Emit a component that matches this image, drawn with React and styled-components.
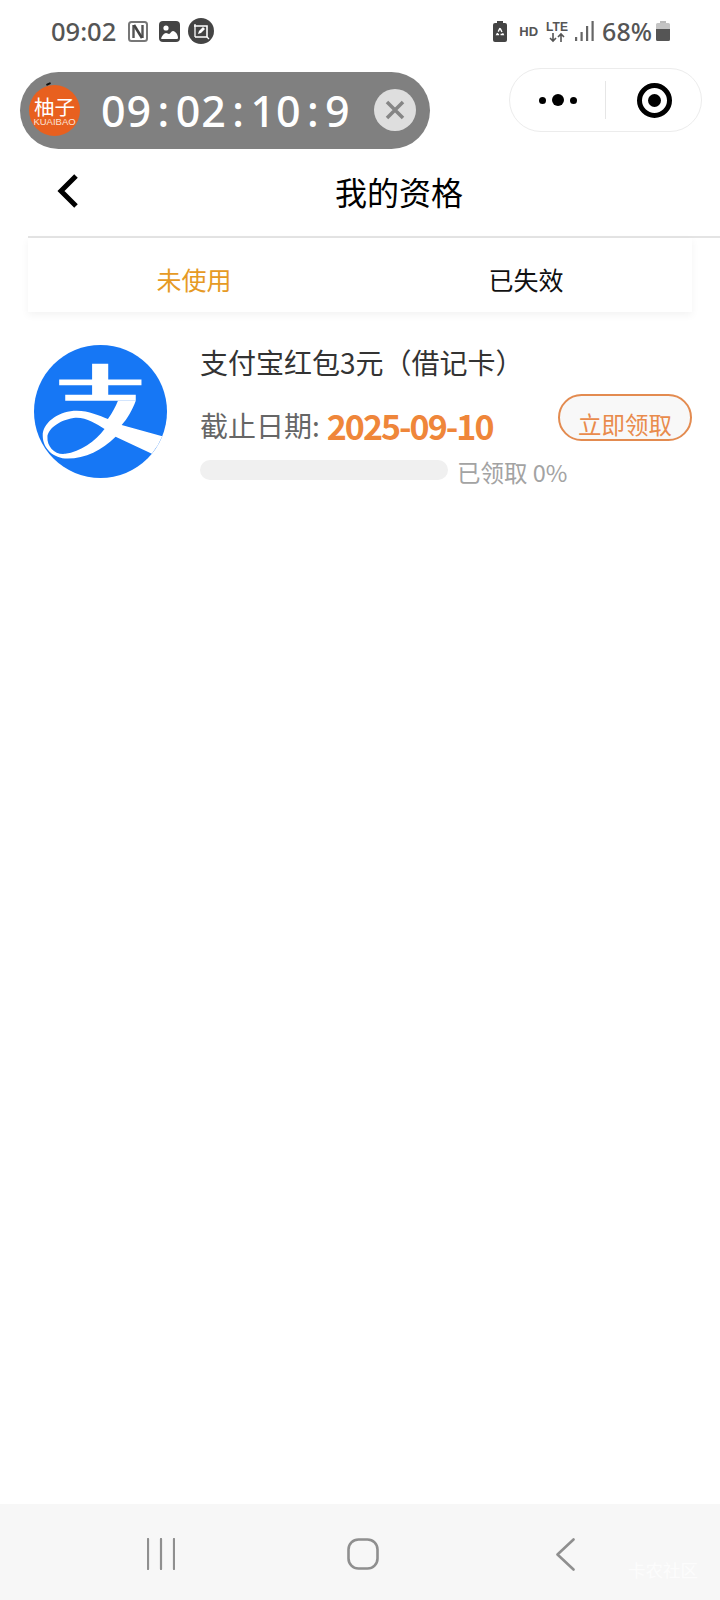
import React from "react";
import styled, { createGlobalStyle } from "styled-components";

const GlobalStyle = createGlobalStyle`
  html, body {
    margin: 0;
    padding: 0;
    background: #fff;
    font-family: "Noto Sans", "Noto Sans CJK SC", sans-serif;
  }
`;

const Page = styled.div`
  position: relative;
  width: 720px;
  height: 1600px;
  display: flex;
  flex-direction: column;
  overflow: hidden;
  background: #fff;
`;

/* status bar */
const StatusBar = styled.div`
  height: 68px;
  flex: none;
  display: flex;
  align-items: flex-start;
  justify-content: space-between;
  padding: 18px 50px 0 51px;
  box-sizing: border-box;
  color: #555;
`;

const StatusGroup = styled.div`
  display: flex;
  align-items: center;
  height: 26px;
`;

const Clock = styled.span`
  font-family: "Noto Sans", sans-serif;
  font-size: 25.5px;
  font-weight: 500;
  line-height: 26px;
  margin-right: 12px;
`;

const Percent = styled.span`
  font-family: "Noto Sans", sans-serif;
  font-size: 25px;
  font-weight: 500;
  line-height: 26px;
  margin: 0 4px 0 8px;
`;

const Hd = styled.span`
  font-family: "Liberation Sans", sans-serif;
  font-weight: 700;
  font-size: 13px;
  margin: 0 8px 0 12px;
`;

const IconSvg = styled.svg`
  display: block;
  flex: none;
  margin-right: ${(p) => p.$gap || 0}px;
`;

/* capsule */
const CapsuleRow = styled.div`
  flex: none;
  display: flex;
  justify-content: flex-end;
  padding-right: 18px;
`;

const Capsule = styled.div`
  width: 193px;
  height: 64px;
  box-sizing: border-box;
  border: 1px solid #ececec;
  border-radius: 32px;
  display: grid;
  grid-template-columns: 1fr 1px 1fr;
  align-items: center;
  justify-items: center;
`;

const CapsuleDivider = styled.div`
  width: 1px;
  height: 38px;
  background: #e6e6e6;
`;

const Dots = styled.div`
  display: flex;
  align-items: center;
  gap: 6px;
`;

const Dot = styled.i`
  display: block;
  width: ${(p) => p.$size}px;
  height: ${(p) => p.$size}px;
  border-radius: 50%;
  background: #000;
`;

const Target = styled.div`
  width: 35px;
  height: 35px;
  margin-left: 2px;
  box-sizing: border-box;
  border: 5px solid #000;
  border-radius: 50%;
  display: flex;
  align-items: center;
  justify-content: center;

  &::after {
    content: "";
    width: 13px;
    height: 13px;
    border-radius: 50%;
    background: #000;
  }
`;

/* floating timer */
const TimerPill = styled.div`
  position: absolute;
  left: 20px;
  top: 72px;
  width: 410px;
  height: 77px;
  border-radius: 39px;
  background: #808080;
  display: flex;
  align-items: center;
  padding-left: 9px;
  box-sizing: border-box;
`;

const TimerLogo = styled.div`
  position: relative;
  width: 51px;
  height: 51px;
  flex: none;
  border-radius: 50%;
  background: #e8601f;
  color: #fff;
  display: flex;
  flex-direction: column;
  align-items: center;
  justify-content: center;

  &::before {
    content: "";
    position: absolute;
    left: 17px;
    top: -2px;
    width: 5px;
    height: 2px;
    border-radius: 2px;
    background: #111;
    transform: rotate(-25deg);
  }
`;

const TimerLogoName = styled.span`
  font-family: "Noto Sans CJK SC", sans-serif;
  font-size: 20.5px;
  line-height: 21px;
`;

const TimerLogoSub = styled.span`
  font-family: "Liberation Sans", sans-serif;
  font-size: 9.5px;
  line-height: 9px;
  color: #fbe3d6;
`;

const TimerText = styled.span`
  font-family: "Noto Sans", sans-serif;
  font-size: 43px;
  font-weight: 500;
  color: #fff;
  margin-left: 21px;
  letter-spacing: 1px;
  white-space: nowrap;
`;

const TimerColon = styled.span`
  margin: 0 5.4px;
`;

const TimerClose = styled.div`
  position: absolute;
  right: 14px;
  top: 17px;
  width: 42px;
  height: 42px;
  border-radius: 50%;
  background: #dedede;
  display: flex;
  align-items: center;
  justify-content: center;
`;

/* nav */
const NavBar = styled.div`
  flex: none;
  height: 85px;
  box-sizing: border-box;
  padding: 0 0 5px 57px;
  margin-top: 19px;
  display: flex;
  align-items: center;
  gap: 257px;
`;

const Title = styled.h1`
  margin: 0;
  font-family: "Noto Sans CJK SC", sans-serif;
  font-weight: 400;
  font-size: 32px;
  line-height: 40px;
  color: #000;
`;

const NavRule = styled.div`
  flex: none;
  height: 2px;
  margin-left: 28px;
  background: #e4e4e4;
`;

const Tabs = styled.div`
  flex: none;
  height: 74px;
  box-sizing: border-box;
  padding-top: 8px;
  margin: 0 28px;
  display: grid;
  grid-template-columns: 1fr 1fr;
  align-items: center;
  justify-items: center;
  box-shadow: 0 3px 8px rgba(0, 0, 0, 0.05);
`;

const Tab = styled.div`
  font-family: "Noto Sans CJK SC", sans-serif;
  font-size: 25px;
  line-height: 32px;
  color: ${(p) => (p.$active ? "#e69a25" : "#111")};
`;

/* qualification card */
const Card = styled.div`
  flex: none;
  display: flex;
  gap: 33px;
  padding: 33px 28px 0 34px;
`;

const Info = styled.div`
  flex: 1;
  min-width: 0;
`;

const CardTitle = styled.div`
  height: 49px;
  font-family: "Noto Sans CJK SC", sans-serif;
  font-size: 28px;
  line-height: 34px;
  color: #333;
  white-space: nowrap;
`;

const MiddleRow = styled.div`
  height: 66px;
  display: flex;
  align-items: flex-start;
  justify-content: space-between;
`;

const DateBlock = styled.div`
  display: flex;
  align-items: center;
  height: 62px;
  font-family: "Noto Sans CJK SC", sans-serif;
`;

const DateLabel = styled.span`
  font-size: 28px;
  color: #666;
`;

const DateValue = styled.span`
  font-size: 34px;
  font-weight: 700;
  letter-spacing: -2px;
  color: #ef863a;
  margin-left: 7px;
`;

const ClaimButton = styled.div`
  width: 134px;
  height: 47px;
  box-sizing: border-box;
  border: 2px solid #e38b50;
  border-radius: 24px;
  background: #f8f8f8;
  color: #e98b4c;
  font-family: "Noto Sans CJK SC", sans-serif;
  font-size: 23.5px;
  line-height: 30px;
  text-align: center;
  padding-top: 13px;
  overflow: hidden;
`;

const ProgressRow = styled.div`
  display: flex;
  align-items: center;
  gap: 9px;
  height: 24px;
`;

const ProgressTrack = styled.div`
  width: 248px;
  height: 20px;
  margin-top: -4px;
  border-radius: 10px;
  background: #f0f0f0;
  overflow: hidden;
`;

const ProgressText = styled.span`
  font-family: "Noto Sans CJK SC", sans-serif;
  font-size: 23.5px;
  line-height: 28px;
  color: #a3a3a3;
  white-space: nowrap;
`;

const Filler = styled.div`
  flex: 1;
`;

/* system nav */
const SystemBar = styled.div`
  position: relative;
  flex: none;
  height: 96px;
  box-sizing: border-box;
  background: #f7f7f7;
  padding: 34px 0 0 60px;
  display: grid;
  grid-template-columns: repeat(3, 202px);
  justify-content: start;
  align-items: start;
  justify-items: center;
`;

const Watermark = styled.span`
  position: absolute;
  left: 628px;
  top: 56px;
  font-family: "Noto Sans CJK SC", sans-serif;
  font-size: 17.5px;
  line-height: 20px;
  color: rgba(255, 255, 255, 0.7);
`;

const NfcIcon = () => (
  <IconSvg width="20" height="21" viewBox="0 0 20 21" $gap={11}>
    <rect x="1" y="1" width="18" height="19" rx="2.5" fill="#fff" stroke="#777" strokeWidth="2" />
    <path d="M5.500 4v13M14.500 4v13" stroke="#555" strokeWidth="2.400" />
    <path d="M6 4l8 13" stroke="#444" strokeWidth="2.600" />
  </IconSvg>
);

const ImageIcon = () => (
  <IconSvg width="21" height="21" viewBox="0 0 21 21" $gap={8}>
    <rect width="21" height="21" rx="4" fill="#444" />
    <circle cx="7" cy="7" r="2.600" fill="#fff" />
    <path d="M2 17.500c1-3 3-5.500 5-5.500 1.500 0 2 1 3 1 1.500 0 2-3 4-3 2.500 0 5 4 5 6.500 0 1-.5 1.500-1.500 1.500H3.500c-1 0-1.500-.2-1.500-.5z" fill="#fff" />
  </IconSvg>
);

const EditIcon = () => (
  <IconSvg width="26" height="26" viewBox="0 0 26 26">
    <circle cx="13" cy="13" r="13" fill="#444" />
    <path d="M6 8h13v11H7" fill="none" stroke="#fff" strokeWidth="1.600" />
    <path d="M7 6v13M19 19l2 2" fill="none" stroke="#fff" strokeWidth="1.300" />
    <path d="M10 16l1-3 4-4 2 2-4 4z" fill="#fff" />
  </IconSvg>
);

const RecycleBattery = () => (
  <IconSvg width="14" height="21" viewBox="0 0 14 21">
    <rect x="4" y="0" width="6" height="3" fill="#444" />
    <rect x="0" y="2" width="14" height="19" rx="2" fill="#444" />
    <path d="M7 7l-3.200 6.500h6.400z" fill="none" stroke="#fff" strokeWidth="1.400" strokeDasharray="4 1.500" />
  </IconSvg>
);

const LteIcon = () => (
  <IconSvg width="22" height="23" viewBox="0 0 22 23" $gap={7}>
    <text x="0" y="10.500" fontFamily="Liberation Sans, sans-serif" fontWeight="700" fontSize="12" textLength="22" fill="#555">LTE</text>
    <path d="M7 13v8M4 18l3 3 3-3M15 22v-8M12 17l3-3 3 3" fill="none" stroke="#555" strokeWidth="1.600" />
  </IconSvg>
);

const SignalIcon = () => (
  <IconSvg width="19" height="20" viewBox="0 0 19 20">
    <rect x="0" y="16" width="2.200" height="4" fill="#666" />
    <rect x="5.500" y="11" width="2.200" height="9" fill="#666" />
    <rect x="11" y="5" width="2.200" height="15" fill="#666" />
    <rect x="16.500" y="0" width="2.200" height="20" fill="#666" />
  </IconSvg>
);

const BatteryIcon = () => (
  <IconSvg width="14" height="20" viewBox="0 0 14 20">
    <rect x="4" y="0" width="6" height="2" fill="#bbb" />
    <path d="M1.500 2h11A1.500 1.500 0 0 1 14 3.500V8H0V3.500A1.500 1.500 0 0 1 1.500 2z" fill="#c4c4c4" />
    <path d="M0 8h14v10.500A1.500 1.500 0 0 1 12.500 20h-11A1.500 1.500 0 0 1 0 18.500z" fill="#555" />
  </IconSvg>
);

const AlipayLogo = () => (
  <IconSvg width="133" height="133" viewBox="12 12 396 396">
    <circle cx="210" cy="210" r="198" fill="#1677f5" />
    <path d="M87 115h98V68h48v47h99v17H233v28h82v18H105v-18h80v-28H87z" fill="#fff" />
    <path
      fillRule="evenodd"
      fill="#fff"
      d="M262 178H315C305 205 290 232 273 250L394 284A198 198 0 0 1 363 336L255 285C215 325 165 350 112 350C70 350 38 320 38 282C38 245 80 213 130 208C170 205 205 222 232 232C245 215 255 195 262 178ZM52 285C54 262 85 236 130 229C165 225 195 245 222 262C195 298 150 330 105 336C75 340 50 315 52 285Z"
    />
  </IconSvg>
);

const BackChevron = () => (
  <IconSvg width="21" height="34" viewBox="0 0 21 34">
    <path d="M19 2L4 17l15 15" fill="none" stroke="#000" strokeWidth="5" />
  </IconSvg>
);

const CloseX = () => (
  <IconSvg width="22" height="22" viewBox="0 0 22 22">
    <path d="M3 3l16 16M19 3L3 19" fill="none" stroke="#858585" strokeWidth="3.500" />
  </IconSvg>
);

const RecentsIcon = () => (
  <IconSvg width="28" height="32" viewBox="0 0 28 32">
    <path d="M1 1v30M14 1v30M27 1v30" fill="none" stroke="#8f8f8f" strokeWidth="2.200" strokeLinecap="round" />
  </IconSvg>
);

const HomeIcon = () => (
  <IconSvg width="32" height="32" viewBox="0 0 32 32">
    <rect x="1.500" y="1.500" width="29" height="29" rx="10" fill="none" stroke="#8f8f8f" strokeWidth="2.600" />
  </IconSvg>
);

const SysBackIcon = () => (
  <IconSvg width="19" height="33" viewBox="0 0 19 33">
    <path d="M17.500 1.500L1.500 16.500l16 15" fill="none" stroke="#8f8f8f" strokeWidth="2.600" strokeLinecap="round" strokeLinejoin="round" />
  </IconSvg>
);

export default function App() {
  return (
    <Page>
      <GlobalStyle />
      <StatusBar>
        <StatusGroup>
          <Clock>09:02</Clock>
          <NfcIcon />
          <ImageIcon />
          <EditIcon />
        </StatusGroup>
        <StatusGroup>
          <RecycleBattery />
          <Hd>HD</Hd>
          <LteIcon />
          <SignalIcon />
          <Percent>68%</Percent>
          <BatteryIcon />
        </StatusGroup>
      </StatusBar>

      <CapsuleRow>
        <Capsule>
          <Dots>
            <Dot $size={7} />
            <Dot $size={12} />
            <Dot $size={7} />
          </Dots>
          <CapsuleDivider />
          <Target />
        </Capsule>
      </CapsuleRow>

      <TimerPill>
        <TimerLogo>
          <TimerLogoName>柚子</TimerLogoName>
          <TimerLogoSub>KUAIBAO</TimerLogoSub>
        </TimerLogo>
        <TimerText>
          09<TimerColon>:</TimerColon>02<TimerColon>:</TimerColon>10<TimerColon>:</TimerColon>9
        </TimerText>
        <TimerClose>
          <CloseX />
        </TimerClose>
      </TimerPill>

      <NavBar>
        <BackChevron />
        <Title>我的资格</Title>
      </NavBar>
      <NavRule />

      <Tabs>
        <Tab $active>未使用</Tab>
        <Tab>已失效</Tab>
      </Tabs>

      <Card>
        <AlipayLogo />
        <Info>
          <CardTitle>支付宝红包3元（借记卡）</CardTitle>
          <MiddleRow>
            <DateBlock>
              <DateLabel>截止日期:</DateLabel>
              <DateValue>2025-09-10</DateValue>
            </DateBlock>
            <ClaimButton>立即领取</ClaimButton>
          </MiddleRow>
          <ProgressRow>
            <ProgressTrack />
            <ProgressText>已领取 0%</ProgressText>
          </ProgressRow>
        </Info>
      </Card>

      <Filler />

      <SystemBar>
        <RecentsIcon />
        <HomeIcon />
        <SysBackIcon />
        <Watermark>卡农社区</Watermark>
      </SystemBar>
    </Page>
  );
}
